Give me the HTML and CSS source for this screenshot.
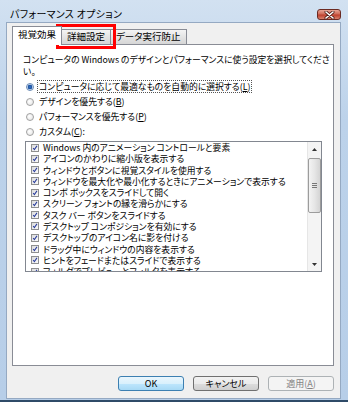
FILE: index.html
```html
<!DOCTYPE html>
<html lang="ja">
<head>
    <meta charset="UTF-8">
    <title>パフォーマンス オプション</title>
    <link rel="stylesheet" href="styles.css">
</head>
<body>
    <div class="window">
        <!-- タイトルバー -->
        <div class="titlebar">
            <span class="title">パフォーマンス オプション</span>
            <span class="close">
                <svg width="11" height="8" viewBox="0 0 11 8">
                    <path d="M2 1 L9 7 M9 1 L2 7" stroke="#4a1a14" stroke-width="3" stroke-linecap="round"/>
                    <path d="M2 1 L9 7 M9 1 L2 7" stroke="#fff" stroke-width="1.6" stroke-linecap="round"/>
                </svg>
            </span>
        </div>

        <div class="client">
            <div class="tabs">
                <div class="tab active">視覚効果</div>
                <div class="tab">詳細設定</div>
                <div class="tab">データ実行防止</div>
            </div>

            <div class="panel">
                <p class="desc">コンピュータの Windows のデザインとパフォーマンスに使う設定を選択してくださ<br>い。</p>

                <div class="radios">
                    <div class="radio checked"><span class="circle"></span><span class="label focus">コンピュータに応じて最適なものを自動的に選択する(<u>L</u>)</span></div>
                    <div class="radio"><span class="circle"></span><span class="label">デザインを優先する(<u>B</u>)</span></div>
                    <div class="radio"><span class="circle"></span><span class="label">パフォーマンスを優先する(<u>P</u>)</span></div>
                    <div class="radio"><span class="circle"></span><span class="label">カスタム(<u>C</u>):</span></div>
                </div>

                <div class="listbox">
                    <ul class="items" id="items"></ul>
                    <div class="scrollbar">
                        <div class="arrow">
                            <svg width="5" height="3" viewBox="0 0 5 3"><path d="M0 3 L2.5 0 L5 3 Z" fill="#333"/></svg>
                        </div>
                        <div class="thumb"><span class="grip"></span></div>
                        <div class="track"></div>
                        <div class="arrow">
                            <svg width="5" height="3" viewBox="0 0 5 3"><path d="M0 0 L5 0 L2.5 3 Z" fill="#333"/></svg>
                        </div>
                    </div>
                </div>
            </div>

            <div class="buttons">
                <button class="btn default">OK</button>
                <button class="btn">キャンセル</button>
                <button class="btn disabled">適用(<u>A</u>)</button>
            </div>
        </div>

        <!-- 注目枠 -->
        <div class="highlight"></div>
    </div>

    <script>
        // リストボックスの項目
        const effects = [
            'Windows 内のアニメーション コントロールと要素',
            'アイコンのかわりに縮小版を表示する',
            'ウィンドウとボタンに視覚スタイルを使用する',
            'ウィンドウを最大化や最小化するときにアニメーションで表示する',
            'コンボ ボックスをスライドして開く',
            'スクリーン フォントの縁を滑らかにする',
            'タスク バー ボタンをスライドする',
            'デスクトップ コンポジションを有効にする',
            'デスクトップのアイコン名に影を付ける',
            'ドラッグ中にウィンドウの内容を表示する',
            'ヒントをフェードまたはスライドで表示する',
            'フォルダでプレビューとフィルタを表示する'
        ];

        const check = '<svg width="8" height="8" viewBox="0 0 8 8"><path d="M1.5 4 L3.2 6.2 L6.6 1.2" fill="none" stroke="#2a3d9c" stroke-width="1.4"/></svg>';
        const list = document.getElementById('items');
        effects.forEach(text => {
            const li = document.createElement('li');
            li.innerHTML = `<span class="checkbox">${check}</span><span class="text">${text}</span>`;
            list.appendChild(li);
        });
    </script>
</body>
</html>
```

FILE: styles.css
```css
/* ベース */
* {
    margin: 0;
    padding: 0;
    box-sizing: border-box;
}

body {
    font-family: "Noto Sans CJK JP", "Noto Sans", sans-serif;
    font-size: 8.8px;
    font-feature-settings: "palt";
    color: #000;
    background: #fff;
}

.window {
    position: relative;
    width: 348px;
    height: 402px;
    background: linear-gradient(#d2e1f1, #bcd2ea 30%, #b7cee8);
    border-bottom: 2px solid #2f4b68;
    display: flex;
    flex-direction: column;
}

/* タイトルバー */
.titlebar {
    height: 22px;
    display: flex;
    justify-content: space-between;
    align-items: flex-start;
    padding: 0 7px 0 10px;
}

.title {
    font-size: 10px;
    line-height: 12px;
    margin-top: 8px;
    letter-spacing: 0.3px;
}

.close {
    margin-top: 9px;
    width: 24px;
    height: 11px;
    border: 1px solid #6b2a22;
    border-radius: 3px;
    background: linear-gradient(#e8a696, #cf6b58 45%, #bd3f2c 55%, #d9826c);
    display: flex;
    align-items: center;
    justify-content: center;
}

.close svg {
    display: block;
}

/* クライアント領域 */
.client {
    flex: 1;
    margin: 0 7px 1px 6px;
    background: #f0f0f0;
    border: 1px solid #95a9c2;
    padding: 3px 6px 0 5px;
    display: flex;
    flex-direction: column;
}

.tabs {
    display: flex;
    align-items: flex-end;
    height: 18px;
}

.tab {
    height: 15px;
    line-height: 13px;
    padding: 0 5px;
    border: 1px solid #898c95;
    border-bottom: none;
    border-left: none;
    background: linear-gradient(#f4f4f4, #e4e4e4 50%, #d6d6d6);
    font-size: 9.5px;
}

.tab.active {
    position: relative;
    z-index: 1;
    height: 19px;
    line-height: 15px;
    margin-bottom: -1px;
    border-left: 1px solid #898c95;
    background: #fff;
}

.panel {
    height: 322px;
    background: #fff;
    border: 1px solid #898c95;
    padding: 9px 0 0 10px;
}

.desc {
    line-height: 12px;
    white-space: nowrap;
    margin-bottom: 1px;
}

/* ラジオボタン */
.radio {
    height: 15px;
    display: flex;
    align-items: center;
    gap: 4px;
    padding-left: 3px;
}

.circle {
    width: 8px;
    height: 8px;
    border-radius: 50%;
    border: 1px solid #a0a0a0;
    background: radial-gradient(circle at 40% 40%, #fff, #e2e2e2);
}

.radio.checked .circle {
    border-color: #6a8ab5;
    background: radial-gradient(circle, #2f72c8 0, #1c4f9c 2px, #c9dcf2 2.6px, #f4f8fd 4px);
}

.label {
    line-height: 11px;
    padding: 0 1px;
}

.label.focus {
    outline: 1px dotted #555;
}

/* リストボックス */
.listbox {
    margin: 2px 0 0 2px;
    width: 297px;
    height: 131px;
    border: 1px solid #828790;
    display: flex;
    overflow: hidden;
}

.items {
    flex: 1;
    list-style: none;
    overflow: hidden;
}

.items li {
    height: 11.27px;
    display: flex;
    align-items: center;
    gap: 4px;
    padding-left: 5px;
    white-space: nowrap;
}

.items .text {
    line-height: 11px;
}

.checkbox {
    width: 8px;
    height: 8px;
    border: 1px solid #8e8f8f;
    background: linear-gradient(135deg, #dcdcdc, #fbfbfb);
    display: flex;
    align-items: center;
    justify-content: center;
    flex-shrink: 0;
}

.checkbox svg {
    display: block;
}

.scrollbar {
    width: 14px;
    background: #f4f4f4;
    border-left: 1px solid #e6e6e6;
    display: flex;
    flex-direction: column;
}

.arrow {
    height: 14px;
    display: flex;
    align-items: center;
    justify-content: center;
}

.thumb {
    margin-top: 2px;
    height: 55px;
    border: 1px solid #9c9c9c;
    border-radius: 2px;
    background: linear-gradient(90deg, #f3f3f3, #e6e6e6 50%, #d4d4d4);
    display: flex;
    align-items: center;
    justify-content: center;
}

.grip {
    width: 5px;
    height: 5px;
    border-top: 1px solid #777;
    border-bottom: 1px solid #777;
    background: linear-gradient(#777, #777) center / 5px 1px no-repeat;
}

.track {
    flex: 1;
}

/* ボタン */
.buttons {
    display: flex;
    justify-content: flex-end;
    gap: 9px;
    margin-top: 10px;
}

.btn {
    width: 66px;
    height: 15px;
    font-family: inherit;
    font-size: 9px;
    font-feature-settings: "palt";
    line-height: 13px;
    border: 1px solid #707070;
    border-radius: 3px;
    background: linear-gradient(#f2f2f2, #ebebeb 50%, #dddddd 50%, #cfcfcf);
    color: #000;
}

.btn.default {
    border-color: #3c7fb1;
    background: linear-gradient(#eaf6fd, #d9f0fc 50%, #bee6fd 50%, #a7d9f5);
}

.btn.disabled {
    border-color: #adb2b5;
    background: #f4f4f4;
    color: #838383;
}

/* 赤い注目枠 */
.highlight {
    position: absolute;
    left: 56px;
    top: 24px;
    width: 60px;
    height: 25px;
    border: 3px solid #f00;
}
```
